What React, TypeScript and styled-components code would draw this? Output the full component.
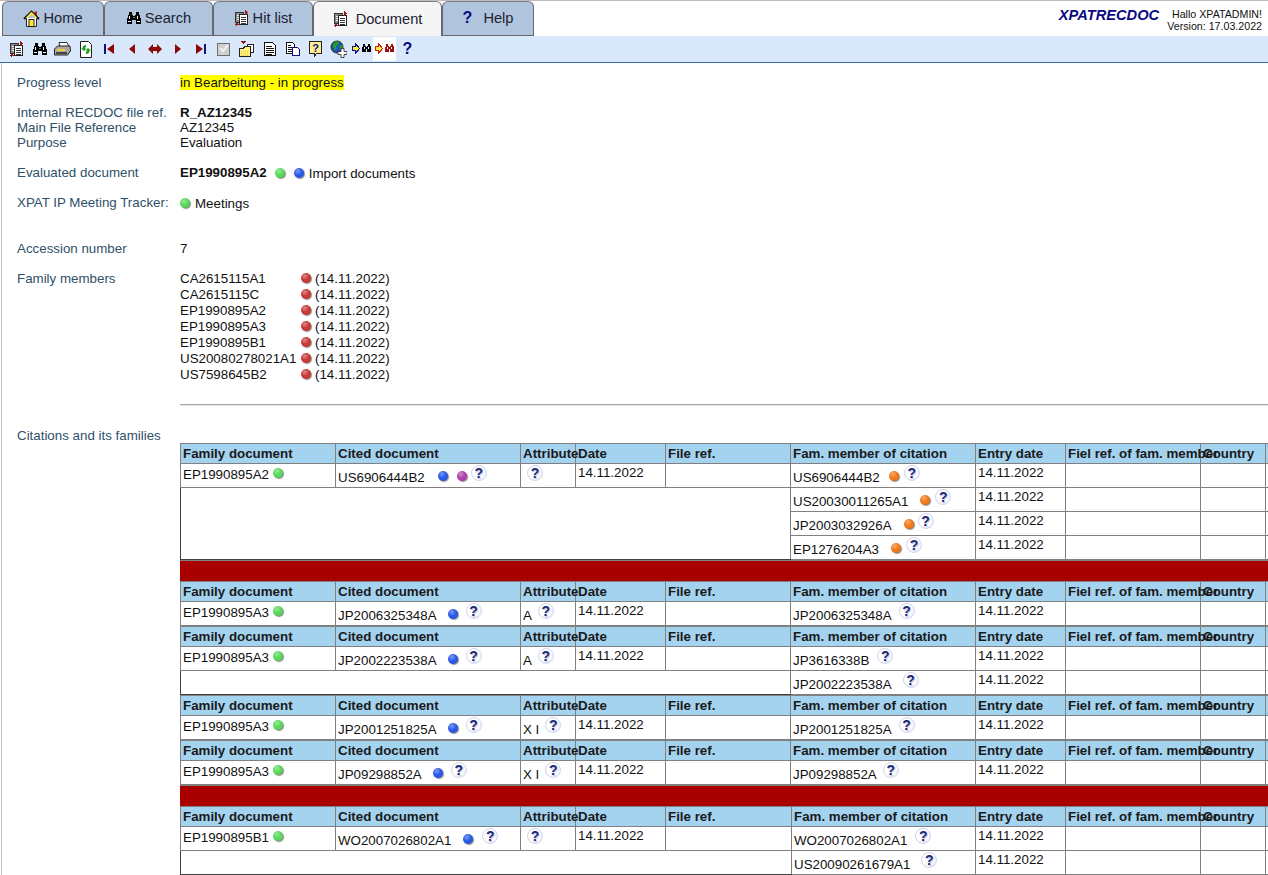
import React from "react";
import styled, { createGlobalStyle } from "styled-components";

const Global = createGlobalStyle`
  html, body { margin: 0; padding: 0; background: #fff; height: 875px; overflow: hidden; }
  body { font-family: "Liberation Sans", Arial, sans-serif; font-size: 13.33px; color: #111; }
  #root { height: 875px; overflow: hidden; }
`;

const Page = styled.div`
  width: 1268px; height: 875px; overflow: hidden; position: relative;
  border-top: 1px solid #bdbdbd; box-sizing: border-box;
`;
const TopBar = styled.div`
  display: flex; height: 35px; justify-content: space-between; padding-left: 2px;
  background: #fff;
`;
const Tabs = styled.div`display: flex; align-items: stretch;`;
const Tab = styled.div<{ $w: number; $active?: boolean }>`
  width: ${p => p.$w}px; box-sizing: border-box; display: flex; align-items: center; justify-content: center; gap: 3px;
  font-size: 14.67px; color: #1c2230; padding-bottom: 1px;
  background: ${p => (p.$active ? "#f5f5f5" : "#b0c4de")};
  border: 1px solid #666a70;
  border-top-color: #7c7c7c;
  border-bottom: ${p => (p.$active ? "0" : "1px solid #666a70")};
  border-radius: 6px 6px 0 0;
`;
const Brand = styled.div`display: flex; align-items: flex-start; gap: 8px; padding: 6px 6px 0 0;`;
const BrandName = styled.div`
  font-size: 14.67px; font-weight: bold; font-style: italic; color: #0a0a80; line-height: 17px;
`;
const Hello = styled.div`font-size: 10.67px; line-height: 12px; text-align: right; color: #111; margin-top: 1px;`;
const Toolbar = styled.div`
  height: 26px; background: #d9e9fb; border-bottom: 1px solid #3b6a9e; display: flex; align-items: center;
  padding-left: 5px;
`;
const ToolBtn = styled.div<{ $hot?: boolean }>`
  width: 23px; height: 24px; display: flex; align-items: center; justify-content: center;
  background: ${p => (p.$hot ? "#fff" : "transparent")};
`;
const Qmark = styled.span`font-weight: bold; font-size: 16px; color: #0a0a80; line-height: 16px;`;

const Content = styled.div`padding-top: 12px; border-left: 1px solid #c4c4c4; margin-left: 1px; height: 800px;`;
const InfoRow = styled.div<{ $mt?: number }>`
  display: grid; grid-template-columns: 163px 1fr; padding-left: 15px; line-height: 15px; margin-top: ${p => p.$mt || 0}px;
`;
const Label = styled.div`color: #2f5068;`;
const Value = styled.div<{ $bold?: boolean }>`
  display: flex; align-items: center; font-weight: ${p => (p.$bold ? "bold" : "normal")}; color: #111;
`;
const Bold = styled.span`font-weight: bold; margin-right: 8px;`;
const After = styled.span`margin-left: 5px; position: relative; top: 1px;`;
const Highlight = styled.span`background: #ffff00; line-height: 15px;`;
const FamilyList = styled.div`display: grid; grid-template-columns: 121px 14px auto; justify-content: start; line-height: 16px; align-items: center;`;
const Rule = styled.div`height: 2px; margin: 21px 0 0 178px; background: linear-gradient(#a8a8a8 50%, #e6e6e6 50%);`;
const CiteLabel = styled.div`padding-left: 15px; line-height: 15px; margin-top: 22px; color: #2f5068;`;
const TableWrap = styled.div`margin-left: 178px; width: 1200px;`;

const Dot = styled.span<{ $c: string; $ml?: number; $mt?: number }>`
  display: inline-block; flex: none; width: 10px; height: 10px; border-radius: 50%; margin-left: ${p => p.$ml ?? 0}px;
  margin-top: ${p => p.$mt ?? 0}px;
  background:
    radial-gradient(circle at 38% 30%, rgba(255,255,255,.4) 0, rgba(255,255,255,0) 45%),
    radial-gradient(circle at 45% 40%, ${p => p.$c} 60%, rgba(0,0,0,.5) 130%), ${p => p.$c};
  box-shadow: 1px 1px 1px rgba(50,50,50,.55);
`;
const FamilyDot = styled(Dot)`margin-top: -2px;`;
const Help = styled.span<{ $ml?: number }>`
  display: inline-flex; flex: none; align-items: center; justify-content: center; width: 16px; height: 16px; border-radius: 50%;
  box-sizing: border-box; border: 1px solid #d3d7ee;
  margin-left: ${p => p.$ml ?? 0}px; font-weight: bold; font-size: 14px; line-height: 14px; color: #1a2a78;
  background: radial-gradient(circle at 45% 45%, #fff 50%, #e2e5f6 85%, #c2c8e8 100%);
  text-shadow: 1px 1px 1px rgba(120,130,190,.5);
`;

const Table = styled.table`
  border-collapse: collapse; table-layout: fixed; width: 1115px; font-size: 13.33px;
`;
const Th = styled.th`
  background: #a4d3f0; border: 1px solid #808080; height: 19px; padding: 0 0 0 2px; text-align: left; font-weight: bold;
  white-space: nowrap; overflow: visible; color: #1a1a1a; line-height: 18px; box-sizing: content-box;
`;
const Td = styled.td`
  border: 1px solid #808080; height: 23px; padding: 0 0 0 2px; vertical-align: top; background: #fff; white-space: nowrap;
  box-sizing: content-box; overflow: visible;
`;
const Merged = styled.td`
  border: 1px solid #808080; border-left-color: #404040; border-bottom-color: #404040; background: #fff;
  height: 23px; padding: 0; box-sizing: content-box;
`;
const CellRow = styled.div<{ $top: number }>`
  display: flex; align-items: flex-start; height: 23px; padding-top: ${p => p.$top}px; box-sizing: border-box; line-height: 15px;
`;
const CellText = styled.span<{ $drop?: number }>`margin-top: ${p => p.$drop ?? 0}px;`;
const Band = styled.div`
  height: 20px; background: #a80000; border-top: 1px solid #808080; width: 1115px;
`;

const IconDocs = () => (
  <svg width="16" height="16" viewBox="0 0 16 16" shapeRendering="crispEdges">
    <rect x="1.500" y="2.500" width="8" height="10" fill="#8a8a8a" stroke="#333" />
    <path d="M3 5h5M3 7h2M3 9h2" stroke="#eee" />
    <rect x="5.500" y="4.500" width="8" height="10" fill="#fff" stroke="#222" />
    <path d="M7 7h5M7 9h5M7 11h5M7 13h5" stroke="#333" />
    <path d="M11 0h1v1h1v1h1v1h-1v1h-1v1h-1zM2 13h2v1h1v1H3v1H2v-1H1v-1h1z" fill="#a01818" />
  </svg>
);
const IconBino: React.FC<{ c?: string }> = ({ c = "#000" }) => (
  <svg width="16" height="16" viewBox="0 0 16 16" shapeRendering="crispEdges">
    <path d="M3 2h3v3h1v1h2V5h1V2h3v3h1v3h1v6H10v-4H6v4H1V8h1V5h1z" fill={c} />
    <path d="M3 6h1v3H3zM11 6h1v3h-1zM2 11h3v1H2zM11 11h3v1h-3z" fill="#fff" />
    <path d="M7 7h2v1H7z" fill="#777" />
  </svg>
);
const IconHome = () => (
  <svg width="17" height="17" viewBox="0 0 17 17">
    <rect x="11.500" y="1.500" width="2.500" height="5" fill="#c82018" />
    <path d="M3.500 8v8.500h10V8" fill="#fff" stroke="#222" />
    <path d="M1 9L8.500 1.500 16 9" fill="none" stroke="#111" strokeWidth="1.800" />
    <path d="M3.500 8L8.500 3l5 5" fill="none" stroke="#ffe830" strokeWidth="1.600" />
    <rect x="6" y="9.500" width="5" height="7" fill="#ffe830" stroke="#222" />
  </svg>
);
const IconPrinter = () => (
  <svg width="17" height="16" viewBox="0 0 17 16">
    <path d="M5 1.500h8l2 4H6z" fill="#fff" stroke="#333" />
    <path d="M.5 8l3-3h12.500l.5 5-3 4H.5z" fill="#a8a8a8" stroke="#222" />
    <rect x="3" y="8" width="8" height="2" fill="#f0d030" />
    <rect x="2" y="11" width="11" height="2" fill="#444" />
  </svg>
);
const IconRefresh = () => (
  <svg width="16" height="17" viewBox="0 0 16 17">
    <path d="M2.500.5h8l3 3v13h-11z" fill="#fff" stroke="#222" />
    <path d="M8 4a3.500 3.500 0 0 0-3.500 3.500H3L6 10l2.500-2.500H7A1.500 1.500 0 0 1 8 6z" fill="#18a018" />
    <path d="M8 13a3.500 3.500 0 0 0 3.500-3.500H13L10 7 7.500 9.500H9A1.500 1.500 0 0 1 8 11z" fill="#18a018" />
  </svg>
);
const Tri: React.FC<{ d: string; bar?: number }> = ({ d, bar }) => (
  <svg width="16" height="16" viewBox="0 0 16 16">
    {bar !== undefined && <rect x={bar} y="3" width="2" height="10" fill="#10107e" />}
    <path d={d} fill="#8e0a0a" />
  </svg>
);
const IconCheck = () => (
  <svg width="16" height="16" viewBox="0 0 16 16" shapeRendering="crispEdges">
    <rect x="1.500" y="2.500" width="12" height="12" fill="#cfcfcf" stroke="#6e6e6e" />
    <path d="M4 7l3 3 5-6" fill="none" stroke="#f2f2f2" strokeWidth="2" shapeRendering="auto" />
  </svg>
);
const IconFolder = () => (
  <svg width="16" height="16" viewBox="0 0 16 16" shapeRendering="crispEdges">
    <path d="M1 0h7L4.500 3z" fill="#8e1010" />
    <rect x="8.500" y="3.500" width="6" height="8" fill="#fff" stroke="#222" />
    <path d="M.5 7.500h4l1-2h6v10h-11z" fill="#ffee80" stroke="#222" />
    <path d="M2 10h8M2 12h8M2 14h8" stroke="#e8c840" strokeDasharray="1 1" />
  </svg>
);
const IconDoc = () => (
  <svg width="16" height="16" viewBox="0 0 16 16" shapeRendering="crispEdges">
    <path d="M2.500 1.500h8l3 3v10h-11z" fill="#fff" stroke="#111" />
    <path d="M4 5h6M4 7h8M4 9h8M4 11h8M4 13h6" stroke="#111" />
  </svg>
);
const IconCopy = () => (
  <svg width="16" height="16" viewBox="0 0 16 16" shapeRendering="crispEdges">
    <path d="M1.500 1.500h6l2 2v9h-8z" fill="#fff" stroke="#111" />
    <path d="M3 4h3M3 6h4M3 8h4M3 10h4" stroke="#111" />
    <path d="M7.500 6.500h5l2 2v6h-7z" fill="#fff" stroke="#10107e" />
  </svg>
);
const IconHelpDoc = () => (
  <svg width="16" height="18" viewBox="0 0 16 18" shapeRendering="crispEdges">
    <path d="M1.500 1.500h12v12h-5l-2 3v-3h-5z" fill="#ffef90" stroke="#222" />
    <text x="7.500" y="12" fontSize="11" fontWeight="bold" textAnchor="middle" fill="#10107e" fontFamily="Liberation Sans">?</text>
  </svg>
);
const IconGlobe = () => (
  <svg width="17" height="18" viewBox="0 0 17 18">
    <circle cx="7" cy="7" r="6" fill="#2050c0" stroke="#222" />
    <path d="M3 4l3-3 3 1-1 3-2 1 1 3-2 1-2-3zM9 6l3-1 1 2-2 3z" fill="#20a020" />
    <path d="M11 8.500v3h-3v3h3v3h3v-3h3v-3h-3v-3z" fill="#fff" stroke="#222" strokeWidth=".8" />
  </svg>
);
const IconFind: React.FC<{ hot?: boolean }> = ({ hot }) => (
  <svg width="20" height="14" viewBox="0 0 20 14" shapeRendering="crispEdges">
    <path d="M.5 4.500h3v-3l4 5-4 5v-3h-3z" fill="#ffee30" stroke={hot ? "#d02020" : "#10107e"} />
    <path d="M11 2h2v2h1v1h1V4h1V2h2v2l1 1v5H15V7h-1v3H10V5l1-1z" fill={hot ? "#a01010" : "#000"} />
    <path d="M12 5h1v2h-1zM16 5h1v2h-1z" fill="#fff" />
  </svg>
);

const tools: React.ReactNode[] = [
  <IconDocs />, <IconBino />, <IconPrinter />, <IconRefresh />,
  <Tri bar={3} d="M13 3v10L6 8z" />, <Tri d="M11 3v10L5 8z" />,
  <Tri d="M1 8l5-5v3h4V3l5 5-5 5v-3H6v3z" />, <Tri d="M5 3v10l6-5z" />, <Tri bar={11} d="M3 3v10l7-5z" />,
  <IconCheck />, <IconFolder />, <IconDoc />, <IconCopy />, <IconHelpDoc />, <IconGlobe />, <IconFind />,
];

type Piece = { k: "t" | "d" | "h"; v?: string; ml?: number };
const T = (v: string): Piece => ({ k: "t", v });
const D = (v: string, ml: number): Piece => ({ k: "d", v, ml });
const H = (ml: number): Piece => ({ k: "h", ml });
const G = "#58d858", B = "#2858e8", P = "#b040b0", O = "#f07818", R = "#c83838";

const heads = ["Family document", "Cited document", "Attribute", "Date", "File ref.", "Fam. member of citation", "Entry date", "Fiel ref. of fam. member", "Country", ""];
const widths = [155, 185, 55, 90, 125, 185, 90, 135, 65, 30];

type Group = { doc: string; cited: Piece[]; attr: Piece[]; fam: Piece[]; extras?: Piece[][]; shift?: boolean };

const groups: (Group | "band")[] = [
  { doc: "EP1990895A2", cited: [T("US6906444B2"), D(B, 13), D(P, 9), H(4)], attr: [H(4)], fam: [T("US6906444B2"), D(O, 9), H(5)],
    extras: [[T("US20030011265A1"), D(O, 12), H(5)], [T("JP2003032926A"), D(O, 12), H(4)], [T("EP1276204A3"), D(O, 12), H(5)]] },
  "band",
  { doc: "EP1990895A3", cited: [T("JP2006325348A"), D(B, 11), H(8)], attr: [T("A"), H(6)], fam: [T("JP2006325348A"), H(7)] },
  { doc: "EP1990895A3", cited: [T("JP2002223538A"), D(B, 11), H(8)], attr: [T("A"), H(6)], fam: [T("JP3616338B"), H(8)], extras: [[T("JP2002223538A"), H(11)]] },
  { doc: "EP1990895A3", cited: [T("JP2001251825A"), D(B, 11), H(8)], attr: [T("X I"), H(6)], fam: [T("JP2001251825A"), H(7)] },
  { doc: "EP1990895A3", cited: [T("JP09298852A"), D(B, 11), H(8)], attr: [T("X I"), H(6)], fam: [T("JP09298852A"), H(6)] },
  "band",
  { doc: "EP1990895B1", shift: true, cited: [T("WO2007026802A1"), D(B, 12), H(9)], attr: [H(4)], fam: [T("WO2007026802A1"), H(8)], extras: [[T("US20090261679A1"), H(11)]] },
];

const RowPieces: React.FC<{ items: Piece[] }> = ({ items }) => (
  <CellRow $top={1}>
    {items.map((p, i) =>
      p.k === "t" ? <CellText key={i} $drop={5}>{p.v}</CellText>
      : p.k === "d" ? <Dot key={i} $c={p.v as string} $ml={p.ml} $mt={6} />
      : <Help key={i} $ml={p.ml}>?</Help>
    )}
  </CellRow>
);

const GroupTable: React.FC<{ g: Group }> = ({ g }) => {
  const w = g.shift ? [155, 185, 55, 90, 126, 184, 90, 135, 65, 30] : widths;
  const extras = g.extras || [];
  return (
    <Table>
      <colgroup>{w.map((x, i) => <col key={i} style={{ width: x }} />)}</colgroup>
      <tbody>
        <tr>{heads.map((h, i) => <Th key={i}>{h}</Th>)}</tr>
        <tr>
          <Td><CellRow $top={3}><span>{g.doc}</span><Dot $c={G} $ml={4} $mt={1} /></CellRow></Td>
          <Td><RowPieces items={g.cited} /></Td>
          <Td><RowPieces items={g.attr} /></Td>
          <Td><CellRow $top={1}>14.11.2022</CellRow></Td>
          <Td />
          <Td><RowPieces items={g.fam} /></Td>
          <Td><CellRow $top={1}>14.11.2022</CellRow></Td>
          <Td /><Td /><Td />
        </tr>
        {extras.map((e, i) => (
          <tr key={i}>
            {i === 0 && <Merged colSpan={5} rowSpan={extras.length} />}
            <Td><RowPieces items={e} /></Td>
            <Td><CellRow $top={1}>14.11.2022</CellRow></Td>
            <Td /><Td /><Td />
          </tr>
        ))}
      </tbody>
    </Table>
  );
};

const family = ["CA2615115A1", "CA2615115C", "EP1990895A2", "EP1990895A3", "EP1990895B1", "US20080278021A1", "US7598645B2"];

export default function App() {
  return (
    <Page>
      <Global />
      <TopBar>
        <Tabs>
          <Tab $w={102}><IconHome /> Home</Tab>
          <Tab $w={109}><IconBino /> Search</Tab>
          <Tab $w={100}><IconDocs /> Hit list</Tab>
          <Tab $w={129} $active><IconDocs />&nbsp;Document</Tab>
          <Tab $w={92}><Qmark>?</Qmark>&nbsp; Help</Tab>
        </Tabs>
        <Brand>
          <BrandName>XPATRECDOC</BrandName>
          <Hello>Hallo XPATADMIN!<br />Version: 17.03.2022</Hello>
        </Brand>
      </TopBar>
      <Toolbar>
        {tools.map((t, i) => <ToolBtn key={i}>{t}</ToolBtn>)}
        <ToolBtn $hot><IconFind hot /></ToolBtn>
        <ToolBtn><Qmark>?</Qmark></ToolBtn>
      </Toolbar>
      <Content>
        <InfoRow><Label>Progress level</Label><Value><Highlight>in Bearbeitung - in progress</Highlight></Value></InfoRow>
        <InfoRow $mt={15}><Label>Internal RECDOC file ref.</Label><Value $bold>R_AZ12345</Value></InfoRow>
        <InfoRow><Label>Main File Reference</Label><Value>AZ12345</Value></InfoRow>
        <InfoRow><Label>Purpose</Label><Value>Evaluation</Value></InfoRow>
        <InfoRow $mt={15}><Label>Evaluated document</Label><Value><Bold>EP1990895A2</Bold><Dot $c={G} /><Dot $c={B} $ml={9} /><After>Import documents</After></Value></InfoRow>
        <InfoRow $mt={15}><Label>XPAT IP Meeting Tracker:</Label><Value><Dot $c={G} /><After>Meetings</After></Value></InfoRow>
        <InfoRow $mt={31}><Label>Accession number</Label><Value>7</Value></InfoRow>
        <InfoRow $mt={15}>
          <Label>Family members</Label>
          <FamilyList>
            {family.map(f => (
              <React.Fragment key={f}>
                <span>{f}</span><FamilyDot $c={R} /><span>(14.11.2022)</span>
              </React.Fragment>
            ))}
          </FamilyList>
        </InfoRow>
        <Rule />
        <CiteLabel>Citations and its families</CiteLabel>
        <TableWrap>
          {groups.map((g, i) => g === "band" ? <Band key={i} /> : <GroupTable key={i} g={g} />)}
        </TableWrap>
      </Content>
    </Page>
  );
}
